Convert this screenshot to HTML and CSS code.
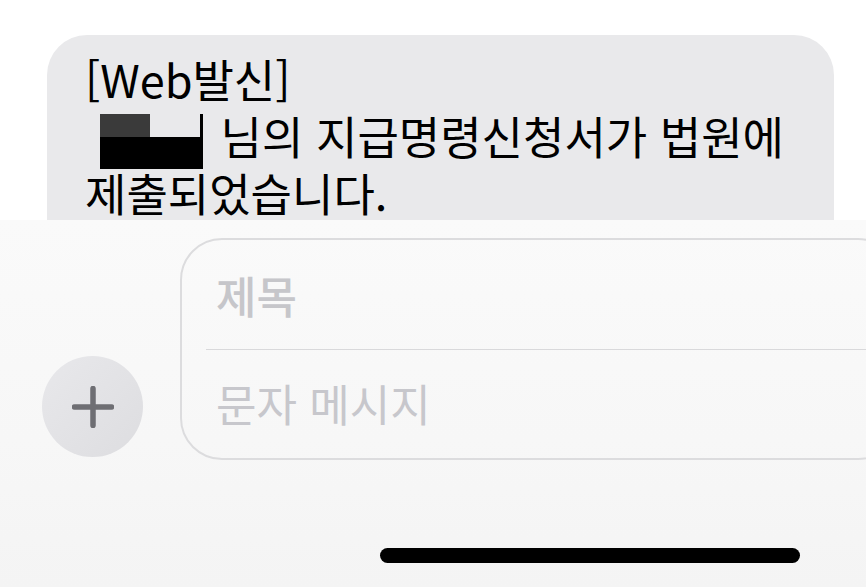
FILE: index.html
```html
<!DOCTYPE html>
<html lang="ko">
<head>
  <meta charset="UTF-8" />
  <meta name="viewport" content="width=device-width, initial-scale=1.0"/>
  <title>메시지</title>
  <link rel="stylesheet" href="styles.css">
</head>
<body>
  <div class="screen">
    <div class="thread">
      <div class="bubble">
        <p class="msg">[Web발신]<br><span class="redact"><span class="redact-top"></span><span class="redact-bottom"></span></span> 님의 지급명령신청서가 법원에<br>제출되었습니다.</p>
      </div>
    </div>

    <div class="composer">
      <div class="compose-row">
        <button class="plus-btn" type="button" aria-label="추가">
          <svg width="42" height="42" viewBox="0 0 42 42">
            <path d="M21 2.5 V39.5 M2.5 21 H39.5" stroke="#6e6e73" stroke-width="5.5" stroke-linecap="round" fill="none"/>
          </svg>
        </button>
        <div class="field">
          <div class="field-row subject">제목</div>
          <div class="field-row body-text">문자 메시지</div>
        </div>
      </div>
      <div class="home-bar"></div>
    </div>
  </div>
</body>
</html>
```

FILE: styles.css
```css
:root {
  --bubble: #e9e9eb;
  --text: #000;
  --hint: #c7c7cc;
  --border: #dcdcde;
}

* {
  box-sizing: border-box;
}

body {
  margin: 0;
  background: #fff;
  font-family: "Noto Sans CJK KR", "Noto Sans", sans-serif;
  color: var(--text);
}

.screen {
  width: 866px;
  height: 587px;
  overflow: hidden;
}

/* message list, cut off by the composer */
.thread {
  height: 220px;
  overflow: hidden;
  padding: 35px 32px 0 47px;
}

.bubble {
  background: var(--bubble);
  border-radius: 40px;
  padding: 15px 20px 40px 38px;
  width: 787px;
}

.msg {
  margin: 0;
  font-size: 45px;
  line-height: 57px;
  white-space: nowrap;
}

/* blacked-out name */
.redact {
  display: inline-block;
  width: 103px;
  height: 55px;
  margin: 0 5px -5px 15px;
  vertical-align: -9px;
  border-right: 3px solid #000;
}

.redact-top {
  display: block;
  width: 50px;
  height: 23px;
  background: #3a3a3a;
}

.redact-bottom {
  display: block;
  height: 32px;
  background: #000;
  margin-right: -3px;
}

/* bottom input area */
.composer {
  height: 367px;
  background: linear-gradient(180deg, #fafafa 0%, #f7f7f7 60%, #f4f4f4 100%);
  padding-top: 18px;
  display: flex;
  flex-direction: column;
}

.compose-row {
  display: flex;
  align-items: flex-end;
  gap: 37px;
  padding-left: 42px;
}

.plus-btn {
  flex: none;
  width: 101px;
  height: 101px;
  margin-bottom: 3px;
  border: none;
  border-radius: 50%;
  background: linear-gradient(135deg, #e8e8eb 0%, #dddde0 100%);
  display: flex;
  align-items: center;
  justify-content: center;
  padding: 0;
}

.field {
  flex: none;
  width: 720px;
  height: 222px;
  border: 2px solid var(--border);
  border-radius: 42px;
  display: flex;
  flex-direction: column;
}

.field-row {
  flex: 1;
  display: flex;
  align-items: center;
  padding-left: 34px;
  font-size: 44px;
  line-height: 1;
  color: var(--hint);
}

.subject {
  font-weight: 500;
  color: #c6c6ca;
  border-bottom: 1px solid #d9d9db;
  margin-left: 24px;
  padding-left: 10px;
  padding-top: 2px;
}

.body-text {
  padding-bottom: 2px;
}

.home-bar {
  width: 420px;
  height: 15px;
  border-radius: 8px;
  background: #000;
  margin: 88px 0 0 380px;
}
```
